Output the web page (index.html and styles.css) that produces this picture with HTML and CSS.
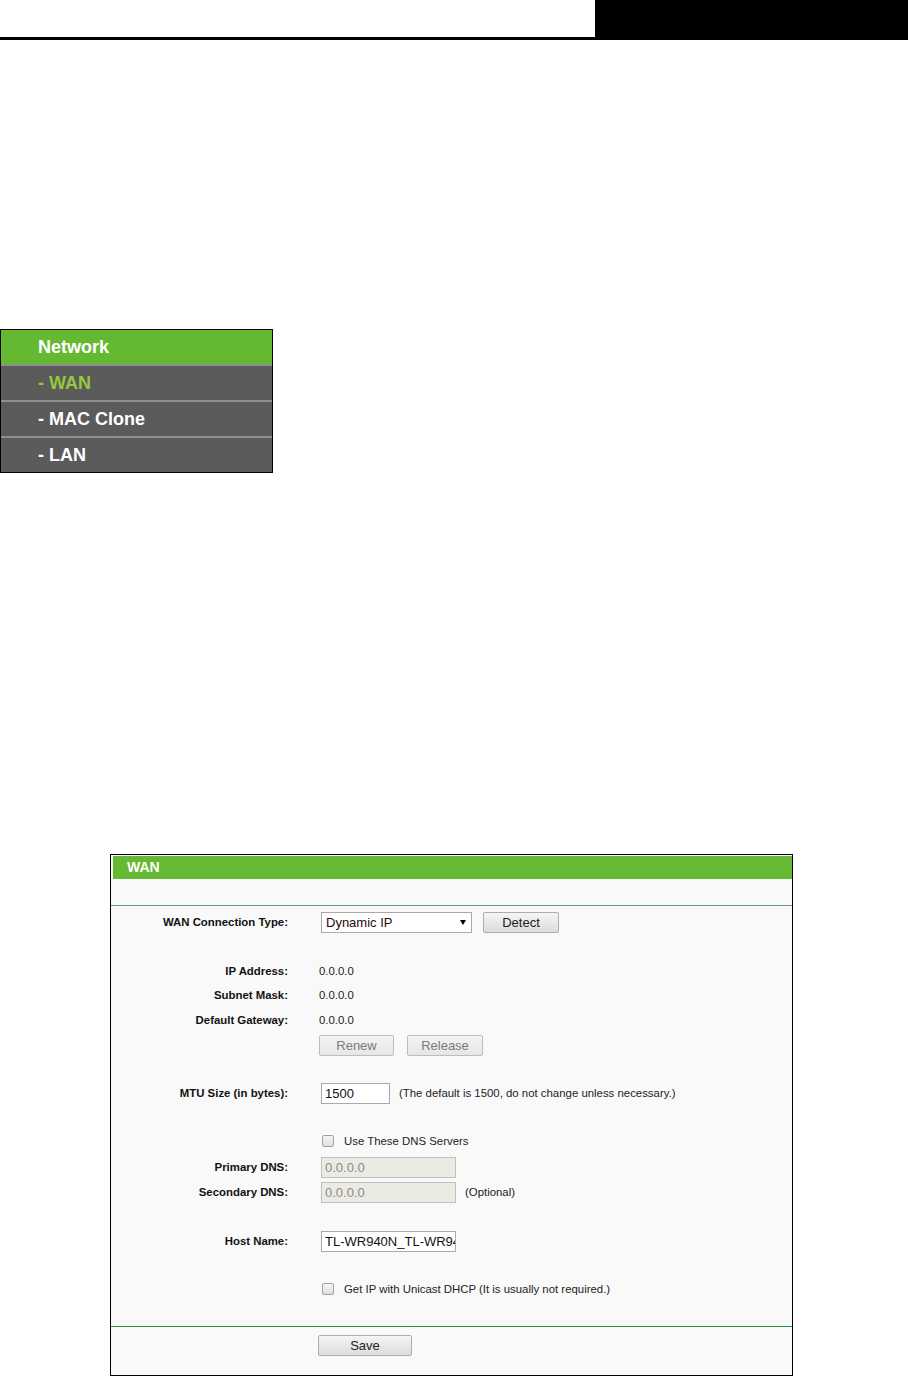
FILE: index.html
```html
<!DOCTYPE html>
<html lang="en">
<head>
	<meta charset="UTF-8">
	<title>WAN</title>
	<link rel="stylesheet" href="styles.css">
</head>
<body>
<div class="topbar">
	<div class="topbar-line"></div>
	<div class="topbar-block"></div>
</div>
<!--/topbar-->

<ul class="menu">
	<li class="menu-head">Network</li>
	<li class="menu-item on">- WAN</li>
	<li class="menu-item">- MAC Clone</li>
	<li class="menu-item">- LAN</li>
</ul>
<!--/menu-->

<div class="panel">
	<div class="panel-title">WAN</div>
	<div class="panel-body">
		<div class="row row-type">
			<label class="lbl">WAN Connection Type:</label>
			<div class="val">
				<span class="select">Dynamic IP</span>
				<button class="btn btn-detect">Detect</button>
			</div>
		</div>
		<div class="row gap-21">
			<label class="lbl">IP Address:</label>
			<div class="val text">0.0.0.0</div>
		</div>
		<div class="row">
			<label class="lbl">Subnet Mask:</label>
			<div class="val text">0.0.0.0</div>
		</div>
		<div class="row gap-1">
			<label class="lbl">Default Gateway:</label>
			<div class="val text">0.0.0.0</div>
		</div>
		<div class="row row-btns">
			<label class="lbl"></label>
			<div class="val">
				<button class="btn btn-off btn-renew">Renew</button>
				<button class="btn btn-off btn-release">Release</button>
			</div>
		</div>
		<div class="row gap-23">
			<label class="lbl">MTU Size (in bytes):</label>
			<div class="val">
				<input class="input input-mtu" type="text" value="1500">
				<span class="note">(The default is 1500, do not change unless necessary.)</span>
			</div>
		</div>
		<div class="row gap-24">
			<label class="lbl"></label>
			<div class="val">
				<span class="check"></span>
				<span class="note">Use These DNS Servers</span>
			</div>
		</div>
		<div class="row gap-2">
			<label class="lbl">Primary DNS:</label>
			<div class="val"><input class="input input-dis" type="text" value="0.0.0.0" disabled></div>
		</div>
		<div class="row gap-1">
			<label class="lbl">Secondary DNS:</label>
			<div class="val">
				<input class="input input-dis" type="text" value="0.0.0.0" disabled>
				<span class="note note-opt">(Optional)</span>
			</div>
		</div>
		<div class="row gap-25">
			<label class="lbl">Host Name:</label>
			<div class="val"><input class="input input-host" type="text" value="TL-WR940N_TL-WR940N"></div>
		</div>
		<div class="row gap-24">
			<label class="lbl"></label>
			<div class="val">
				<span class="check"></span>
				<span class="note">Get IP with Unicast DHCP (It is usually not required.)</span>
			</div>
		</div>
	</div>
	<div class="panel-foot">
		<button class="btn btn-save">Save</button>
	</div>
</div>
<!--/panel-->
</body>
</html>
```

FILE: styles.css
```css
body,div,ul,li {margin:0;padding:0;}
body {
	background:#fff;
	font-family:"Liberation Sans", Arial, sans-serif;
	width:908px;
}
.topbar {
	display:flex;
	height:40px;
}
.topbar-line {
	flex:1;
	border-bottom:3px solid #000;
}
.topbar-block {
	width:313px;
	background:#000;
}
.menu {
	width:271px;
	margin-top:289px;
	border:1px solid #000;
	list-style:none;
}
.menu li {
	height:34px;
	line-height:34px;
	padding-left:37px;
	font-size:18px;
	font-weight:bold;
	color:#fff;
}
.menu-head {
	background:#64b832;
}
.menu-item {
	background:#5b5b5b;
	border-top:2px solid #8e8e8e;
}
.menu-item.on {
	color:#93c93c;
}
.panel {
	width:679px;
	height:519px;
	margin:381px 0 0 110px;
	padding:1px 0 0 2px;
	border:1px solid #000;
	background:#f9f9f9;
}
.panel-title {
	height:23px;
	line-height:22px;
	background:#66b933;
	color:#fff;
	font-size:14px;
	font-weight:bold;
	padding-left:14px;
}
.panel-body {
	margin:26px 0 0 -2px;
	padding:0 0 25px 2px;
	border-top:1px solid #5aa06e;
	border-bottom:1px solid #2e8a45;
}
.row {
	display:flex;
	align-items:center;
	height:24px;
	font-size:11.4px;
	color:#000;
}
.row-type {height:32px;}
.row-btns {height:26px;}
.gap-1 {margin-top:1px;}
.gap-2 {margin-top:2px;}
.gap-21 {margin-top:21px;}
.gap-23 {margin-top:23px;}
.gap-24 {margin-top:24px;}
.gap-25 {margin-top:25px;}
.lbl {
	width:175px;
	text-align:right;
	font-weight:bold;
	color:#111;
}
.val {
	display:flex;
	align-items:center;
	margin-left:31px;
}
.text {
	color:#222;
}
.select {
	position:relative;
	box-sizing:border-box;
	width:151px;
	height:21px;
	line-height:19px;
	margin-left:2px;
	padding-left:4px;
	border:1px solid #a9a9a9;
	background:#fff;
	font-size:13px;
	color:#2a0a0a;
}
.select:after {
	content:"";
	position:absolute;
	right:5px;
	top:7px;
	border-left:3px solid transparent;
	border-right:3px solid transparent;
	border-top:5px solid #000;
}
.btn {
	box-sizing:border-box;
	height:21px;
	padding:0;
	border:1px solid #adadad;
	border-radius:2px;
	background:linear-gradient(#f5f5f5, #dcdcdc);
	font-family:"Liberation Sans", Arial, sans-serif;
	font-size:13px;
	color:#222;
}
.btn-detect {
	width:76px;
	margin-left:11px;
}
.btn-off {
	color:#7a7a7a;
	background:linear-gradient(#f4f4f4, #e6e6e6);
	border-color:#bdbdbd;
}
.btn-renew {width:75px;}
.btn-release {width:76px;margin-left:13px;}
.input {
	box-sizing:border-box;
	height:21px;
	margin:0 0 0 2px;
	padding:0 0 0 3px;
	border:1px solid #a9a9a9;
	background:#fff;
	font-family:"Liberation Sans", Arial, sans-serif;
	font-size:13px;
	color:#111;
	outline:none;
}
.input-mtu {width:69px;}
.input-dis {
	width:135px;
	background:#ebebe4;
	border-color:#bfbfbf;
	color:#8a8a8a;
}
.input-host {width:135px;}
.note {
	margin-left:9px;
	color:#222;
}
.check {
	box-sizing:border-box;
	width:12px;
	height:12px;
	margin-left:3px;
	border:1px solid #a0a0a0;
	border-radius:2px;
	background:linear-gradient(#f6f6f6, #dedede);
}
.check + .note {margin-left:10px;}
.panel-foot {
	padding:8px 0 0 207px;
	margin-left:-2px;
}
.btn-save {
	width:94px;
}
```
